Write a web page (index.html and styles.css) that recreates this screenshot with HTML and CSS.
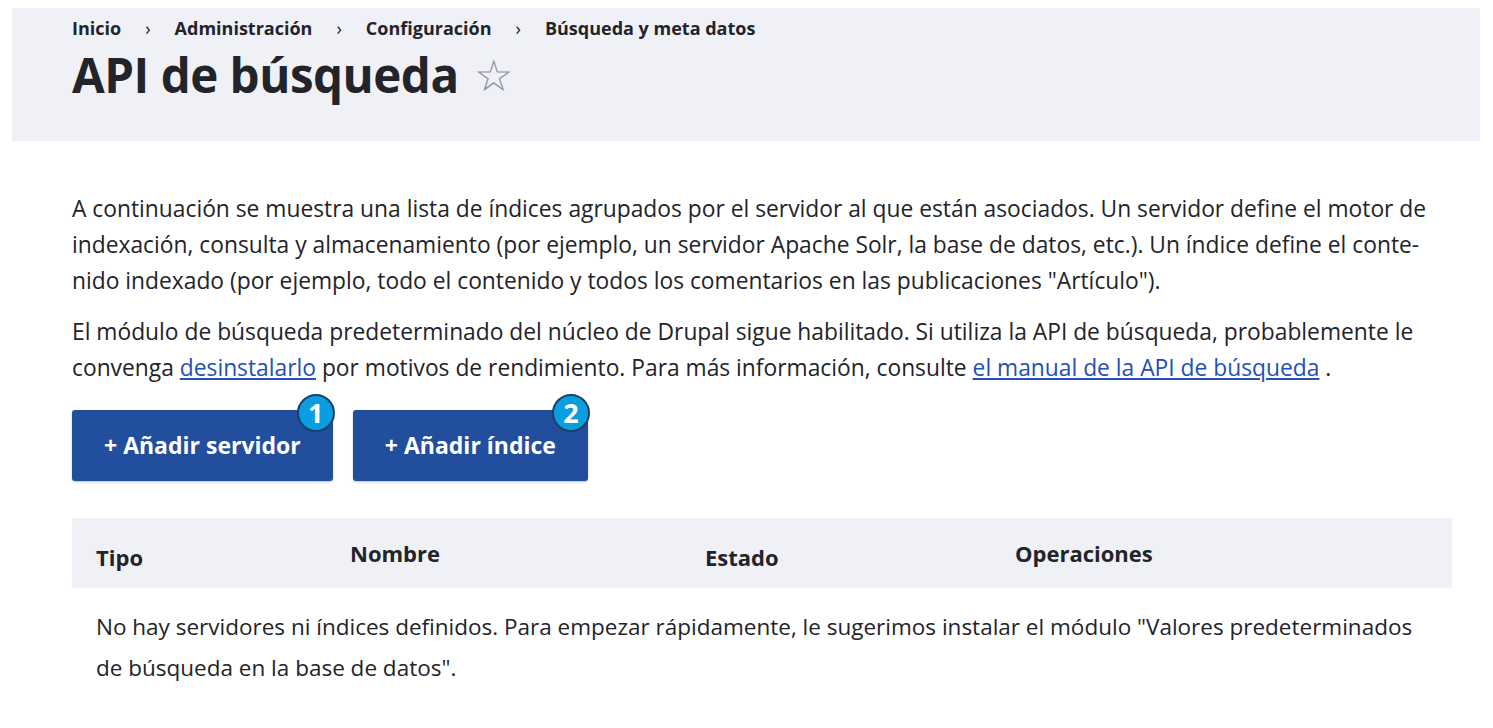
FILE: index.html
```html
<!DOCTYPE html>
<html lang="es">
<head>
    <meta charset="UTF-8">
    <meta name="viewport" content="width=device-width, initial-scale=1.0">
    <title>API de búsqueda</title>
    <link rel="stylesheet" href="styles.css">
</head>
<body>
    <header class="page-header">
        <nav class="breadcrumb">
            <a href="#">Inicio</a>
            <span class="sep">›</span>
            <a href="#">Administración</a>
            <span class="sep">›</span>
            <a href="#">Configuración</a>
            <span class="sep">›</span>
            <a href="#">Búsqueda y meta datos</a>
        </nav>
        <h1 class="page-title">API de búsqueda <span class="star">☆</span></h1>
    </header>

    <main class="content">
        <p>A continuación se muestra una lista de índices agrupados por el servidor al que están asociados. Un servidor define el motor de indexación, consulta y almacenamiento (por ejemplo, un servidor Apache Solr, la base de datos, etc.). Un índice define el conte&shy;nido indexado (por ejemplo, todo el contenido y todos los comentarios en las publicaciones "Artículo").</p>
        <p>El módulo de búsqueda predeterminado del núcleo de Drupal sigue habilitado. Si utiliza la API de búsqueda, probablemente le convenga <a href="#">desinstalarlo</a> por motivos de rendimiento. Para más información, consulte <a href="#">el manual de la API de búsqueda</a> .</p>

        <div class="actions">
            <a href="#" class="button">+ Añadir servidor<span class="badge">1</span></a>
            <a href="#" class="button">+ Añadir índice<span class="badge">2</span></a>
        </div>

        <table class="overview">
            <thead>
                <tr>
                    <th class="col-type">Tipo</th>
                    <th class="col-name">Nombre</th>
                    <th class="col-status">Estado</th>
                    <th class="col-ops">Operaciones</th>
                </tr>
            </thead>
            <tbody>
                <tr>
                    <td colspan="4" class="empty">No hay servidores ni índices definidos. Para empezar rápidamente, le sugerimos instalar el módulo "Valores predeterminados de búsqueda en la base de datos".</td>
                </tr>
            </tbody>
        </table>
    </main>
</body>
</html>
```

FILE: styles.css
```css
body {
    margin: 0;
    font-family: "Open Sans", "Noto Sans", sans-serif;
    color: #232429;
    background: #fff;
}
.page-header {
    background: #f0f1f6;
    margin: 8px 13px 0 12px;
    padding: 10px 60px 36px;
}
.breadcrumb {
    font-size: 18px;
    font-weight: 700;
    line-height: 20px;
    display: flex;
}
.breadcrumb a {
    color: #232429;
    text-decoration: none;
}
.breadcrumb .sep {
    font-weight: 400;
    padding: 0 24px;
}
.page-title {
    margin: 6px 0 0;
    font-size: 47.5px;
    line-height: 60px;
    font-weight: 700;
    letter-spacing: -0.5px;
}
.star {
    font-weight: 400;
    font-size: 44px;
    color: #8e929c;
    vertical-align: 2px;
    margin-left: 4px;
}
.content {
    padding: 50px 41px 0 72px;
}
.content p {
    font-size: 22.8px;
    line-height: 36px;
    margin: 0 0 15px;
}
.content a {
    color: #2450b8;
}
.actions {
    display: flex;
    gap: 20px;
    margin-top: 24px;
}
.button {
    position: relative;
    display: block;
    background: #224e9e;
    color: #fff !important;
    text-decoration: none;
    font-size: 23px;
    font-weight: 700;
    line-height: 71px;
    padding: 0 32px;
    border-radius: 3px;
    box-shadow: 0 1px 2px rgba(0, 0, 0, 0.25);
}
.badge {
    position: absolute;
    top: -16px;
    right: -2px;
    width: 34px;
    height: 34px;
    border-radius: 50%;
    background: #0a9ee0;
    border: 2px solid #1c3f6b;
    color: #fff;
    font-size: 27px;
    line-height: 34px;
    text-align: center;
    font-weight: 700;
}
.overview {
    width: 100%;
    margin-top: 37px;
    border-collapse: collapse;
}
.overview th {
    box-sizing: border-box;
    background: #f0f1f6;
    text-align: left;
    font-size: 22px;
    font-weight: 700;
    height: 70px;
    padding: 0 24px;
}
.col-type { width: 254px; padding-top: 8px !important; }
.col-name { width: 355px; }
.col-status { width: 310px; padding-top: 8px !important; }
.overview .empty {
    font-size: 22.5px;
    line-height: 41px;
    padding: 18px 20px 18px 24px;
}
```
